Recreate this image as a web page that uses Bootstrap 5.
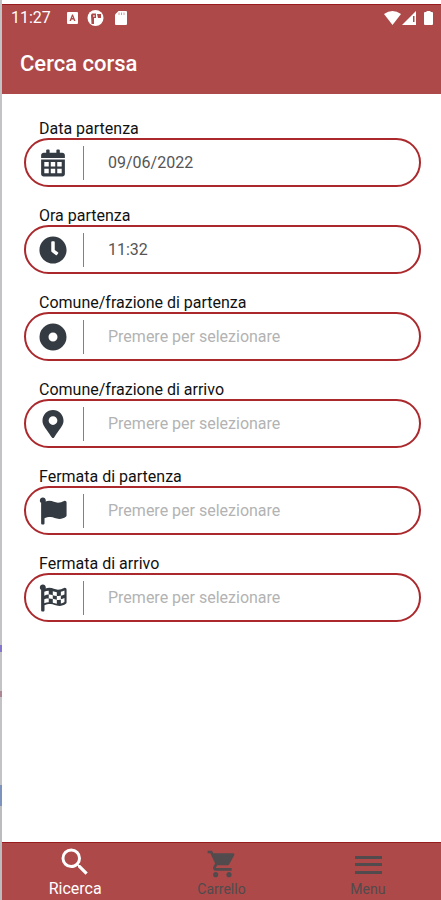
<!DOCTYPE html>
<html lang="it">
<head>
<meta charset="utf-8">
<meta name="viewport" content="width=device-width, initial-scale=1">
<title>Cerca corsa</title>
<link rel="stylesheet" href="https://cdn.jsdelivr.net/npm/bootstrap@5.3.0/dist/css/bootstrap.min.css">
<style>
  body { font-family: Roboto, "Liberation Sans", sans-serif; background: #fff; }
  .edge { width: 2px; background: linear-gradient(#c3c3c6 0 645px, #8377cc 645px 652px, #c3c3c6 652px 691px, #ad8794 691px 697px, #c3c3c6 697px 785px, #7d93bd 785px 806px, #bcbcbf 806px); }
  .bar { background: #ad4948; color: #fff; border-top: 1px solid #981b1d; }
  .app-head { margin-top: 4px; height: 90px; }
  .status { height: 26px; padding: 0 6px 0 9px; font-size: 16px; line-height: 26px; }
  .title { font-size: 22px; line-height: 26px; font-weight: 500; padding: 20px 18px 0; }
  .search-form { padding: 25px 20px 0 22px; }
  .field { margin-bottom: 19px; }
  .field-label { display: block; font-size: 16px; line-height: 19px; color: #111; padding-left: 15px; }
  .pill { height: 49px; border: 2px solid #ab292d; border-radius: 25px; padding-left: 13px; }
  .ico { width: 28px; height: 28px; color: #343b42; }
  .divider { height: 34px; margin-left: 16px; border-left: 1px solid #cf5f63; }
  .entry { font-size: 16px; line-height: 20px; color: #555; padding: 0 16px 0 24px; border: 0; outline: 0; background: transparent; min-width: 0; }
  .entry::placeholder { color: #b3b3b3; opacity: 1; }
  .tabs { height: 58px; }
  .tab { color: #514b4e; font-size: 14px; line-height: 18px; text-decoration: none; }
  .tab-pic { height: 37px; }
  .tab.on { color: #fff; font-size: 16px; }
</style>
<script src="https://cdn.jsdelivr.net/npm/bootstrap@5.3.0/dist/js/bootstrap.bundle.min.js"></script>
</head>
<body>
<div class="d-flex min-vh-100">
  <div class="edge flex-shrink-0"></div>
  <div class="d-flex flex-column flex-grow-1">
    <header class="bar app-head">
      <div class="status d-flex align-items-center">
        <span>11:27</span>
        <svg class="ms-3" width="11" height="12" viewBox="0 0 11 12"><rect width="11" height="12" rx="1" fill="#fff"/><path d="M2.500 9 5 2.500h1L8.500 9H7L6.500 7.500h-2L4 9zM5 6h1l-.5-1.500z" fill="#ad4948"/></svg>
        <svg class="ms-2" width="24" height="16" viewBox="0 0 24 16"><circle cx="9.500" cy="8" r="8" fill="#fff"/><path d="M6 3.500h4V8H8v6H5.500L5 5zM11 4h4v4h-3z" fill="#ad4948"/><path d="M7 5.500h2v1H7z" fill="#fff"/></svg>
        <svg class="ms-1" width="14" height="16" viewBox="0 0 14 16"><path d="M4.500 1H12a1 1 0 0 1 1 1v12a1 1 0 0 1-1 1H2a1 1 0 0 1-1-1V4.500z" fill="#fff"/><path d="M5 2.500v2.500M7.500 2.500v2.500M10 2.500v2.500" stroke="#d79a98"/></svg>
        <svg class="ms-auto" width="51" height="16" viewBox="0 0 51 16"><path d="M0 4Q8.500-2 17 4L8.500 15z" fill="#fff"/><path d="M18 15 32 1v14z" fill="#fff"/><path d="M29 6h1.500v6H29z" fill="#ad4948"/><path d="M42.500 1h4v1H48a1 1 0 0 1 1 1v11a1 1 0 0 1-1 1h-7a1 1 0 0 1-1-1V3a1 1 0 0 1 1-1h1.500z" fill="#fff"/></svg>
      </div>
      <h1 class="title m-0">Cerca corsa</h1>
    </header>

    <main class="flex-grow-1">
      <form class="search-form">
        <div class="field">
          <label class="field-label" for="data">Data partenza</label>
          <div class="pill d-flex align-items-center">
            <svg class="ico flex-shrink-0" viewBox="-32 -8 512 528" fill="currentColor"><path fill-rule="evenodd" d="M0 464c0 26.500 21.500 48 48 48h352c26.500 0 48-21.500 48-48V192H0zM60 238h84v84H60zM182 238h84v84h-84zM304 238h84v84h-84zM60 366h84v84H60zM182 366h84v84h-84zM304 366h84v84h-84zM400 64h-48V16c0-8.800-7.200-16-16-16h-32c-8.800 0-16 7.200-16 16v48H160V16c0-8.800-7.200-16-16-16h-32c-8.800 0-16 7.200-16 16v48H48C21.500 64 0 85.500 0 112v48h448v-48c0-26.500-21.500-48-48-48z"/></svg>
            <span class="divider flex-shrink-0"></span>
            <input class="entry flex-grow-1" id="data" type="text" value="09/06/2022">
          </div>
        </div>
        <div class="field">
          <label class="field-label" for="ora">Ora partenza</label>
          <div class="pill d-flex align-items-center">
            <svg class="ico flex-shrink-0" viewBox="0 0 512 512" fill="currentColor"><path d="M256 8C119 8 8 119 8 256s111 248 248 248 248-111 248-248S393 8 256 8zm92 313-20 25a16 16 0 0 1-22 2l-67-49a40 40 0 0 1-15-31V112a16 16 0 0 1 16-16h32a16 16 0 0 1 16 16v144l58 42a16 16 0 0 1 2 23z"/></svg>
            <span class="divider flex-shrink-0"></span>
            <input class="entry flex-grow-1" id="ora" type="text" value="11:32">
          </div>
        </div>
        <div class="field">
          <label class="field-label" for="comune-da">Comune/frazione di partenza</label>
          <div class="pill d-flex align-items-center">
            <svg class="ico flex-shrink-0" viewBox="0 0 28 28"><circle cx="14" cy="14" r="9" fill="none" stroke="currentColor" stroke-width="9"/></svg>
            <span class="divider flex-shrink-0"></span>
            <input class="entry flex-grow-1" id="comune-da" type="text" placeholder="Premere per selezionare">
          </div>
        </div>
        <div class="field">
          <label class="field-label" for="comune-a">Comune/frazione di arrivo</label>
          <div class="pill d-flex align-items-center">
            <svg class="ico flex-shrink-0" viewBox="-64 0 512 512" fill="currentColor"><path d="M172.268 501.670C26.970 291.031 0 269.413 0 192 0 85.961 85.961 0 192 0s192 85.961 192 192c0 77.413-26.970 99.031-172.268 309.670-9.535 13.774-29.930 13.773-39.464 0zM192 272c44.183 0 80-35.817 80-80s-35.817-80-80-80-80 35.817-80 80 35.817 80 80 80z"/></svg>
            <span class="divider flex-shrink-0"></span>
            <input class="entry flex-grow-1" id="comune-a" type="text" placeholder="Premere per selezionare">
          </div>
        </div>
        <div class="field">
          <label class="field-label" for="fermata-da">Fermata di partenza</label>
          <div class="pill d-flex align-items-center">
            <svg class="ico flex-shrink-0" viewBox="-8 -8 528 528" fill="currentColor"><path d="M349.565 98.783C295.978 98.783 251.721 64 184.348 64c-24.955 0-47.309 4.384-68.045 12.013a55.947 55.947 0 0 0 3.586-23.562C118.117 24.015 94.806 1.206 66.338.048 34.345-1.254 8 24.296 8 56c0 19.026 9.497 35.825 24 45.945V488c0 13.255 10.745 24 24 24h16c13.255 0 24-10.745 24-24v-94.400c28.311-12.064 63.582-22.122 114.435-22.122 53.588 0 97.844 34.783 165.217 34.783 48.169 0 86.667-16.294 122.505-40.858C506.840 359.452 512 349.571 512 339.045v-243.100c0-23.393-24.269-38.870-45.485-29.016-34.338 15.948-76.454 31.854-116.950 31.854z"/></svg>
            <span class="divider flex-shrink-0"></span>
            <input class="entry flex-grow-1" id="fermata-da" type="text" placeholder="Premere per selezionare">
          </div>
        </div>
        <div class="field">
          <label class="field-label" for="fermata-a">Fermata di arrivo</label>
          <div class="pill d-flex align-items-center">
            <svg class="ico flex-shrink-0" viewBox="-8 -8 528 528" fill="currentColor"><path d="M349.565 98.783C295.978 98.783 251.721 64 184.348 64c-24.955 0-47.309 4.384-68.045 12.013a55.947 55.947 0 0 0 3.586-23.562C118.117 24.015 94.806 1.206 66.338.048 34.345-1.254 8 24.296 8 56c0 19.026 9.497 35.825 24 45.945V488c0 13.255 10.745 24 24 24h16c13.255 0 24-10.745 24-24v-94.400c28.311-12.064 63.582-22.122 114.435-22.122 53.588 0 97.844 34.783 165.217 34.783 48.169 0 86.667-16.294 122.505-40.858C506.840 359.452 512 349.571 512 339.045v-243.100c0-23.393-24.269-38.870-45.485-29.016-34.338 15.948-76.454 31.854-116.950 31.854z"/><path fill="#fff" d="M92 138q38-16 84-20v74q-42 3-84 20zM176 192q40-2 76 10v74q-38-12-76-10zM92 280q38-16 84-20v74q-42 4-84 20zM252 128q38 14 76 18v74q-38-4-76-18zM328 220q40 0 76-10v74q-34 10-76 10zM252 272q38 14 76 18v74q-38-4-76-18zM404 136q34-8 68-22v76q-34 14-68 22zM404 280q34-8 68-22v74q-34 20-68 26z"/></svg>
            <span class="divider flex-shrink-0"></span>
            <input class="entry flex-grow-1" id="fermata-a" type="text" placeholder="Premere per selezionare">
          </div>
        </div>
      </form>
    </main>

    <nav class="bar tabs d-flex" aria-label="Sezioni">
      <a class="tab on d-flex flex-column align-items-center flex-fill w-100" href="#ricerca" aria-current="page">
        <span class="tab-pic d-flex align-items-center"><svg width="36" height="36" viewBox="0 0 24 24" fill="currentColor"><path d="M15.500 14h-.79l-.28-.27A6.471 6.471 0 0 0 16 9.500 6.500 6.500 0 1 0 9.500 16c1.610 0 3.090-.59 4.230-1.570l.27.28v.79l5 4.990L20.490 19zm-6 0C7.010 14 5 11.990 5 9.500S7.010 5 9.500 5 14 7.010 14 9.500 11.990 14 9.500 14z"/></svg></span>
        <span>Ricerca</span>
      </a>
      <a class="tab d-flex flex-column align-items-center flex-fill w-100" href="#carrello">
        <span class="tab-pic d-flex align-items-end"><svg width="36" height="32" viewBox="-2 0 26 24" fill="currentColor"><path d="M7 18c-1.100 0-1.990.9-1.990 2S5.900 22 7 22s2-.9 2-2-.9-2-2-2zM1 2v2h2l3.600 7.590-1.350 2.450c-.16.28-.25.61-.25.960 0 1.100.9 2 2 2h12v-2H7.420c-.14 0-.25-.11-.25-.25l.03-.12.9-1.630h7.450c.75 0 1.410-.41 1.750-1.030l3.580-6.490c.08-.14.12-.31.12-.48 0-.55-.45-1-1-1H5.210l-.94-2zm16 16c-1.100 0-1.990.9-1.990 2s.89 2 1.990 2 2-.9 2-2-.9-2-2-2z"/></svg></span>
        <span>Carrello</span>
      </a>
      <a class="tab d-flex flex-column align-items-center flex-fill w-100" href="#menu">
        <span class="tab-pic d-flex align-items-end"><svg width="36" height="32" viewBox="0 0 36 32" fill="currentColor"><path d="M5 8h27v3H5zM5 15h27v3H5zM5 23h27v3H5z"/></svg></span>
        <span>Menu</span>
      </a>
    </nav>
  </div>
</div>
</body>
</html>
